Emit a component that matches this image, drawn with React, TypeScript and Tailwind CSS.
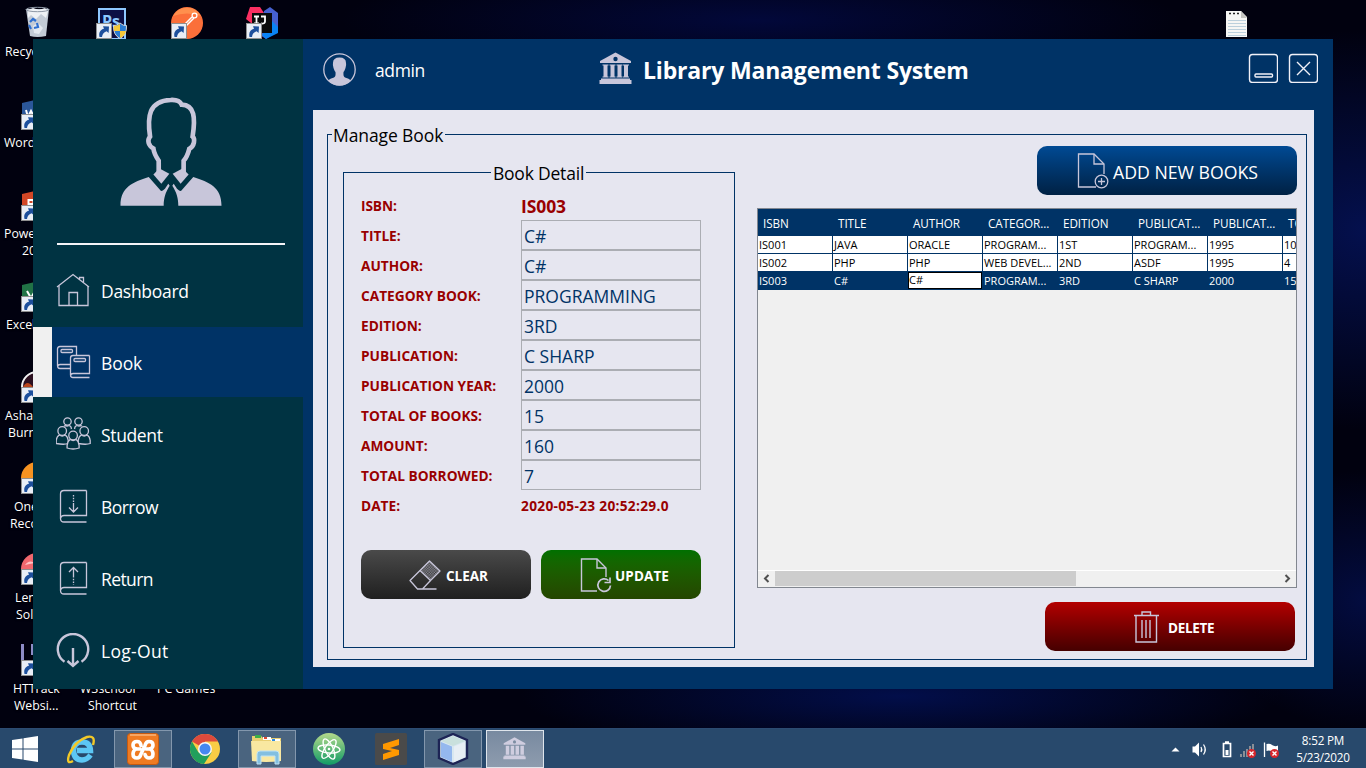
import React from "react";

const INK = "#c8c6da";

/* ---------- desktop ---------- */

function Shortcut() {
  return (
    <g>
      <rect x="0.5" y="0.5" width="15" height="15" fill="#e9eef6" stroke="#8f8f8f" />
      <path d="M3.5 14C2.5 9.5 4.5 6.5 8 5.8L7 3.2L13 3.5L12.6 10L10.6 8.3C7.5 9.5 6.5 11 6 14Z" fill="#1d4f9c" />
    </g>
  );
}

type Tile = { x: number; y: number; art: React.ReactNode };

const tiles: Tile[] = [
  {
    x: 21, y: 5,
    art: (
      <g>
        <path d="M5 4H28L25 31Q16 33 9 31Z" fill="#c3cbd6" />
        <path d="M7 5L12 3L18 5L24 3L27 6L25 13L20 9L15 14L10 10L7 13Z" fill="#eef1f5" />
        <path d="M12 21L17 18L22 23L18 29L13 28Z" fill="#e4e9f0" />
        <ellipse cx="16.5" cy="4.5" rx="11.5" ry="2.2" fill="none" stroke="#8d97a5" />
        <path d="M9 17l3-3 3 2M16 18l1 4-4 1M10 24l-2-4" stroke="#2e6fd0" strokeWidth="2.2" fill="none" />
      </g>
    ),
  },
  {
    x: 96, y: 7,
    art: (
      <g>
        <rect x="3" y="2" width="26" height="30" fill="#0c0f45" stroke="#8ec7ff" strokeWidth="2" />
        <text x="6" y="20" fontSize="16" fontWeight="700" fill="#8ec7ff" fontFamily="Open Sans, sans-serif">Ps</text>
        <g transform="translate(0 16)"><Shortcut /></g>
        <path d="M24 16Q20 19 17.500 18.500Q17 28 24 31.500Q31 28 30.500 18.500Q27 19 24 16Z" fill="#2a7bd0" stroke="#d8d8d8" />
        <path d="M24 17V24H18Q17.500 21 18 19Q21 19 24 17ZM24 24H30Q29 29 24 31Z" fill="#f6c83a" />
      </g>
    ),
  },
  {
    x: 171, y: 7,
    art: (
      <g>
        <circle cx="16" cy="16" r="16" fill="#fb6f3a" />
        <path d="M2 9A16 16 0 0 1 30 9Q16 4 2 9Z" fill="#ff8f4d" />
        <path d="M13 18L21 10M15 19L23 11" stroke="#fff" strokeWidth="1.500" fill="none" />
        <circle cx="23.500" cy="8.500" r="2.400" fill="none" stroke="#fff" strokeWidth="1.300" />
        <g transform="translate(0 16)"><Shortcut /></g>
      </g>
    ),
  },
  {
    x: 246, y: 7,
    art: (
      <g>
        <path d="M4 0L14 0L18 6L10 20L0 12Z" fill="#fb2f62" />
        <path d="M18 4L24 0L32 6V24L20 32L14 28Z" fill="#4661d0" />
        <path d="M26 14L32 20V26L20 32L16 28Z" fill="#0a84f5" />
        <rect x="6" y="6" width="20" height="20" fill="#0b0b0b" />
        <path d="M8 9.500h5M10.500 9.500v7M8 16.500h5M15 9.500h4v5q0 2.500-4 2" stroke="#fff" strokeWidth="1.800" fill="none" />
        <g transform="translate(0 16)"><Shortcut /></g>
      </g>
    ),
  },
  {
    x: 21, y: 98,
    art: (
      <g>
        <path d="M1 5L14 2V32H1Z" fill="#2b579a" />
        <path d="M5 12l2 7 3-6 3 6" stroke="#fff" strokeWidth="2" fill="none" />
        <g transform="translate(0 16)"><Shortcut /></g>
      </g>
    ),
  },
  {
    x: 21, y: 189,
    art: (
      <g>
        <path d="M1 5L14 2V32H1Z" fill="#d24726" />
        <path d="M7.500 18V11h5v4h-4" stroke="#fff" strokeWidth="2" fill="none" />
        <g transform="translate(0 16)"><Shortcut /></g>
      </g>
    ),
  },
  {
    x: 21, y: 280,
    art: (
      <g>
        <path d="M1 5L14 2V32H1Z" fill="#217346" />
        <path d="M6 11l4 7 4-7" stroke="#fff" strokeWidth="2" fill="none" />
        <g transform="translate(0 16)"><Shortcut /></g>
      </g>
    ),
  },
  {
    x: 21, y: 371,
    art: (
      <g>
        <circle cx="16" cy="16" r="15" fill="#2c1020" stroke="#f2f2f2" strokeWidth="2" />
        <path d="M2 16Q6 8 12 16Z" fill="#b9461c" />
        <g transform="translate(0 16)"><Shortcut /></g>
      </g>
    ),
  },
  {
    x: 21, y: 462,
    art: (
      <g>
        <circle cx="16" cy="16" r="16" fill="#f79321" />
        <g transform="translate(0 16)"><Shortcut /></g>
      </g>
    ),
  },
  {
    x: 21, y: 553,
    art: (
      <g>
        <circle cx="16" cy="16" r="16" fill="#f0686e" />
        <path d="M4 12Q8 6 14 10Q8 11 4 12Z" fill="#ffc2c4" />
        <g transform="translate(0 16)"><Shortcut /></g>
      </g>
    ),
  },
  {
    x: 21, y: 644,
    art: (
      <g>
        <path d="M0 0h3v16H0ZM10 0H12v11H10Z" fill="#8d8cc6" />
        <g transform="translate(0 16)"><Shortcut /></g>
      </g>
    ),
  },
  {
    x: 1221, y: 6,
    art: (
      <g>
        <path d="M5 5H20L26 11V31H5Z" fill="#f6f6f4" />
        <path d="M20 5V12H26Z" fill="#c4c4c0" />
        <path d="M7 14.500h18M7 17.500h18M7 20.500h18M7 23.500h18M7 26.500h18M7 29.500h18" stroke="#bcd0dc" />
        <path d="M8 7.500h2M12 7.500h2M16 7.500h2" stroke="#222" strokeWidth="1.500" />
      </g>
    ),
  },
];

const captions: [number, number, string][] = [
  [5, 44, "Recycle"], [4, 135, "Word"], [4, 226, "Power"], [22, 243, "20"], [6, 317, "Excel"],
  [5, 408, "Asham"], [8, 425, "Burni"], [14, 499, "One"], [10, 516, "Reco"], [15, 590, "Len"],
  [16, 607, "Sol"], [13, 681, "HTTrack"], [14, 698, "Websi..."], [80, 681, "W3school"],
  [88, 698, "Shortcut"], [157, 681, "PC Games"],
];

function Desktop() {
  return (
    <div className="absolute inset-0 overflow-hidden bg-[#01010f] bg-[radial-gradient(ellipse_260px_200px_at_1366px_230px,#04104e_0%,transparent_100%),radial-gradient(ellipse_160px_130px_at_1366px_600px,#030c40_0%,transparent_100%),radial-gradient(ellipse_380px_60px_at_900px_696px,#020e4a_0%,transparent_100%),radial-gradient(ellipse_420px_60px_at_760px_20px,#02083a_0%,transparent_100%)]">
      {tiles.map((t, i) => (
        <svg key={i} className="absolute size-8" style={{ left: t.x, top: t.y }} viewBox="0 0 32 32">
          {t.art}
        </svg>
      ))}
      {captions.map(([x, y, s]) => (
        <span
          key={s + y}
          className="absolute text-[12.3px] leading-4 whitespace-nowrap text-white [text-shadow:0_1px_2px_#000]"
          style={{ left: x, top: y }}
        >
          {s}
        </span>
      ))}
    </div>
  );
}

/* ---------- sidebar ---------- */

function Portrait() {
  const half = (
    <g>
      <path d="M480 506L508 521L484 551L460 523L474 509Z" />
      <path d="M361 617C361 562 398 546 446 531L483 573C495 571 497 561 505 551L509 557C496 577 491 595 491 617Z" />
    </g>
  );
  return (
    <svg className="ml-[87px] mt-[58px] h-[109px] w-[102px]" viewBox="360 290 306 328" fill={INK}>
      <path
        d="M476 516V482C468 470 462 460 460 445C444 436 441 420 450 409C441 350 446 301 512 299C530 298 541 304 545 313C584 314 587 352 578 409C586 416 584 438 568 446C564 462 560 472 551 482V516"
        fill="none" stroke={INK} strokeWidth="14"
      />
      {half}
      <g transform="translate(1026 0) scale(-1 1)">{half}</g>
    </svg>
  );
}

const HomeIcon = (
  <g>
    <path d="M1.500 14L17.500 1.500L33.500 14" />
    <path d="M3.500 13V32.500H32.500V13" />
    <path d="M13.500 32V19.500H22V32" />
    <path d="M24 6.500V4.500H28V9.500" />
  </g>
);

const BookIcon = (
  <g>
    <path d="M15 23.500H4.500Q2 23.500 2 20.500V4Q2 1.500 4.500 1.500H21V10M4 19.500H14.500M2 21.500Q2.500 19.500 4.500 19.500" />
    <rect x="5.500" y="4.500" width="11.500" height="3" rx="1" />
    <path d="M34 10.500H17.500Q15 10.500 15 13V30Q15 32.500 17.500 32.500H34M34 10.500V28.500H17.500Q15.500 28.500 15 30.500" />
    <rect x="18.500" y="13.500" width="11.500" height="3" rx="1" />
  </g>
);

function Person({ x, y, front }: { x: number; y: number; front?: boolean }) {
  return (
    <g transform={`translate(${x} ${y})`}>
      <circle cx="0" cy="0" r="4.300" />
      <path d={front ? "M-6 12.500V10Q-5.500 5.500 -3 4Q0 6 3 4Q5.500 5.500 6 10V12.500Q0 14.500 -6 12.500Z" : "M-6 12.500V9.500Q-5.500 5.500 -3 4Q0 6 3 4Q5.500 5.500 6 9.500V12.500Q2 14 -6 12.500Z"} />
    </g>
  );
}

const StudentIcon = (
  <g>
    <circle cx="12" cy="4.500" r="3.700" />
    <circle cx="23" cy="4.500" r="3.700" />
    <path d="M8.500 9Q9.500 8.500 12 9Q14.500 8 15.500 10L16 12M26.500 9Q25.500 8.500 23 9Q20.500 8 19.500 10L19 12" />
    <Person x={6.7} y={14} />
    <Person x={28.700} y={14} />
    <g fill="#003342"><Person x={17.600} y={18.500} front /></g>
  </g>
);

const bookShell = (
  <path d="M31 1.500H8.500Q5 1.500 5 5V29.500Q5 33 8.500 33H31M31 1.500V26.500H8.500Q5.500 26.500 5 29.500" />
);
const BorrowIcon = (
  <g>
    {bookShell}
    <path d="M18 6V14" strokeDasharray="1.500 1.300" />
    <path d="M18 14V22.500M13.500 18.500L18 23L22.500 18.500" />
  </g>
);
const ReturnIcon = (
  <g>
    {bookShell}
    <path d="M18 15V24" strokeDasharray="1.500 1.300" />
    <path d="M18 15V7M13.500 11L18 6.500L22.500 11" />
  </g>
);
const LogOutIcon = (
  <g strokeWidth="2.400">
    <path d="M9 28.800A15.200 15.200 0 1 1 26 28.800" />
    <path d="M17.500 15V33M12 28L17.500 33L23 28" />
  </g>
);

const nav = [
  { label: "Dashboard", icon: HomeIcon, track: "tracking-[-0.28px]" },
  { label: "Book", icon: BookIcon, active: true, track: "tracking-[-0.1px]" },
  { label: "Student", icon: StudentIcon, track: "tracking-[-0.35px]" },
  { label: "Borrow", icon: BorrowIcon, track: "tracking-[-0.55px]" },
  { label: "Return", icon: ReturnIcon, track: "tracking-[-0.6px]" },
  { label: "Log-Out", icon: LogOutIcon, track: "tracking-[0.3px]" },
];

function Sidebar() {
  return (
    <aside className="flex w-[270px] flex-col bg-[#003342]">
      <Portrait />
      <div className="mt-[37px] ml-6 h-[2px] w-[228px] bg-[#f4f4f8]" />
      <nav className="mt-[10px] flex flex-col gap-[2px]">
        {nav.map((n) => (
          <div
            key={n.label}
            className={
              n.active
                ? "flex h-[70px] items-center border-l-[19px] border-[#f0f0f0] bg-[#003366] pt-[2px] pl-1"
                : "flex h-[70px] items-center pt-[2px] pl-[23px]"
            }
          >
            <svg className="size-9" viewBox="0.5 0 36 36" fill="none" stroke={INK} strokeWidth="1.300">
              {n.icon}
            </svg>
            <span className={`ml-[9px] text-[17.5px] text-white ${n.track}`}>{n.label}</span>
          </div>
        ))}
      </nav>
    </aside>
  );
}

/* ---------- header ---------- */

function Museum({ className }: { className: string }) {
  return (
    <svg className={className} viewBox="0 0 33 33" fill={INK}>
      <path d="M16.500 0.500L32 9V11H1V9Z" />
      <circle cx="16.500" cy="7" r="2.200" fill="#003366" />
      <path d="M3.500 12.500h6v1h-1v11h1v1h-6v-1h1v-11h-1ZM10.500 12.500h6v1h-1v11h1v1h-6v-1h1v-11h-1ZM17.500 12.500h6v1h-1v11h1v1h-6v-1h1v-11h-1ZM24 12.500h6v1h-1v11h1v1h-6v-1h1v-11h-1Z" />
      <path d="M2 26.500H31V28H32.500V32H0.500V28H2Z" />
    </svg>
  );
}

function Header() {
  return (
    <header className="flex h-[71px] shrink-0 items-start">
      <svg className="mt-[14px] ml-5 size-[33px]" viewBox="0 0 33 33">
        <circle cx="16.500" cy="16.500" r="15.700" fill="none" stroke={INK} strokeWidth="1.300" />
        <path d="M10 10Q10 4.500 16.500 4.500Q23 4.500 23 10Q23.500 12 22.500 15Q21.500 18 20.500 19Q20 23.500 22 24.500Q26 25.500 28 27.500Q23 32.500 16.500 32.500Q10 32.500 5 27.500Q7 25.500 11 24.500Q13 23.500 12.500 19Q11.500 18 10.500 15Q9.500 12 10 10Z" fill={INK} />
      </svg>
      <span className="mt-[19px] ml-[19px] w-[224px] text-[17.5px] leading-6 tracking-[-0.4px] text-white">admin</span>
      <Museum className="size-[33px] mt-[13px]" />
      <h1 className="mt-[15px] ml-[11px] w-[340px] text-[23px] leading-8 font-bold tracking-[-0.18px] whitespace-nowrap text-white">
        Library Management System
      </h1>
      <div className="mt-[14px] ml-[265px] flex gap-[10px]">
        <svg className="size-[30px]" viewBox="-0.5 -0.5 30 30" fill="none" stroke="#f1f1f8" strokeWidth="1.400">
          <rect x="1" y="1" width="28" height="28" rx="3" />
          <rect x="6.500" y="20.500" width="17.500" height="3" rx="1" />
        </svg>
        <svg className="size-[30px]" viewBox="-0.5 -0.5 30 30" fill="none" stroke="#f1f1f8" strokeWidth="1.400">
          <rect x="1" y="1" width="28" height="28" rx="3" />
          <path d="M8.500 8.500L21.500 21.500M21.500 8.500L8.500 21.500" />
        </svg>
      </div>
    </header>
  );
}

/* ---------- book detail ---------- */

const fields: [string, string][] = [
  ["TITLE:", "C#"], ["AUTHOR:", "C#"], ["CATEGORY BOOK:", "PROGRAMMING"], ["EDITION:", "3RD"],
  ["PUBLICATION:", "C SHARP"], ["PUBLICATION YEAR:", "2000"], ["TOTAL OF BOOKS:", "15"],
  ["AMOUNT:", "160"], ["TOTAL BORROWED:", "7"],
];

function BookDetail() {
  return (
    <section className="relative mt-[37px] ml-[15px] h-[476px] w-[392px] border border-[#003366] pl-[17px]">
      <h3 className="absolute -top-3 left-[147px] w-[95px] bg-[#e6e6f0] text-center text-[17.5px] leading-6 tracking-[-0.2px] whitespace-nowrap text-black">
        Book Detail
      </h3>
      <div className="mt-[17px] flex h-[30px] items-center pt-[3px] text-[13.7px] font-bold tracking-[-0.1px] text-[#990000]">
        <span className="w-[160px]">ISBN:</span>
        <span className="text-[17.5px]">IS003</span>
      </div>
      {fields.map(([k, v]) => (
        <div key={k} className="flex h-[30px] items-center">
          <span className="w-[160px] pt-[3px] text-[13.7px] font-bold whitespace-nowrap text-[#990000]">{k}</span>
          <div className="flex h-[30px] w-[180px] items-center border border-[#abadb3] pt-[3px] pl-[2px] text-[17.5px] text-[#003366]">
            {v}
          </div>
        </div>
      ))}
      <div className="flex h-[30px] items-center pt-[3px] text-[13.7px] font-bold text-[#990000]">
        <span className="w-[160px]">DATE:</span>
        <span className="tracking-[0.3px]">2020-05-23 20:52:29.0</span>
      </div>
      <div className="mt-[30px] flex gap-[10px] text-[13.5px] font-bold text-white">
        <button className="flex h-[49px] w-[170px] items-center rounded-[10px] bg-linear-to-b from-[#4a4a4a] to-[#202020] pl-12">
          <svg className="h-[30px] w-[32px]" viewBox="0 0 32 30" fill="none" stroke={INK} strokeWidth="1.300" strokeLinejoin="round">
            <defs>
              <pattern id="dots" width="2.600" height="2.600" patternUnits="userSpaceOnUse">
                <rect width="1.300" height="1.300" fill={INK} fillOpacity="0.6" stroke="none" />
                <rect x="1.300" y="1.300" width="1.300" height="1.300" fill={INK} fillOpacity="0.6" stroke="none" />
              </pattern>
            </defs>
            <path d="M11 10.500L20.500 1L31 11L21.500 20.500Z" fill="url(#dots)" />
            <path d="M11 10.500L1 20.500L8.500 29H13.500L21.500 20.500M8.500 29H27.500" />
          </svg>
          <span className="ml-[5px] pt-[3px]">CLEAR</span>
        </button>
        <button className="flex h-[49px] w-[160px] items-center rounded-[10px] bg-linear-to-b from-[#007000] to-[#244600] pl-[39px]">
          <svg className="h-[36px] w-[32px]" viewBox="0 0 32 36" fill="none" stroke={INK} strokeWidth="1.400">
            <path d="M26 20V11L17 2H1.500V34H17" />
            <path d="M17 2V11H26" />
            <path d="M28.500 23.500A6.300 6.300 0 1 0 30.500 28.500M30 20.500V25.500H24.500" strokeWidth="1.700" />
          </svg>
          <span className="ml-[3px] pt-[3px] tracking-[0.1px]">UPDATE</span>
        </button>
      </div>
    </section>
  );
}

/* ---------- table ---------- */

const heads = ["ISBN", "TITLE", "AUTHOR", "CATEGOR...", "EDITION", "PUBLICAT...", "PUBLICAT...", "TOTAL"];
const rows = [
  ["IS001", "JAVA", "ORACLE", "PROGRAM...", "1ST", "PROGRAM...", "1995", "10"],
  ["IS002", "PHP", "PHP", "WEB DEVEL...", "2ND", "ASDF", "1995", "4"],
  ["IS003", "C#", "C#", "PROGRAM...", "3RD", "C SHARP", "2000", "15"],
];

function BookTable() {
  return (
    <div className="mt-[13px] flex h-[380px] w-[540px] flex-col overflow-hidden border border-[#828790] bg-[#f0f0f0]">
      <div className="flex h-[27px] w-[600px] bg-[#003366]">
        {heads.map((h, i) => (
          <div key={i} className="w-[75px] shrink-0 pt-px pl-[5px] text-[11.7px] leading-[26px] tracking-[-0.05px] whitespace-nowrap text-white">{h}</div>
        ))}
      </div>
      {rows.map((r, ri) => (
        <div key={ri} className={ri === 2 ? "flex h-[18px] w-[600px] bg-[#003366] text-white" : "flex h-[18px] w-[600px] bg-white text-black"}>
          {r.map((c, ci) => (
            <div
              key={ci}
              className={
                ri === 2 && ci === 2
                  ? "mr-px h-[17px] w-[74px] shrink-0 border border-black bg-white text-[11px] leading-[14px] text-black"
                  : "w-[75px] shrink-0 border-r border-b border-[#003366] pl-px text-[11px] leading-[18px] whitespace-nowrap"
              }
            >
              {c}
            </div>
          ))}
        </div>
      ))}
      <div className="mt-auto flex h-[17px] items-start border-t border-white bg-[#f0f0f0]">
        <svg className="h-4 w-[17px]" viewBox="0 0 17 16"><path d="M10.500 4L7 7.500L10.500 11" fill="none" stroke="#505050" strokeWidth="2" /></svg>
        <div className="h-[15px] w-[301px] bg-[#cdcdcd]" />
        <svg className="ml-auto h-4 w-[17px]" viewBox="0 0 17 16"><path d="M6.500 4L10 7.500L6.500 11" fill="none" stroke="#505050" strokeWidth="2" /></svg>
      </div>
    </div>
  );
}

function ManageBook() {
  return (
    <main className="ml-[10px] h-[557px] w-[1001px] bg-[#e6e6f0] pt-6 pl-[14px]">
      <section className="relative flex h-[526px] w-[980px] border border-[#003366]">
        <h2 className="absolute -top-3 left-1 w-[113px] bg-[#e6e6f0] pl-[1px] text-[17.5px] leading-6 tracking-[-0.1px] whitespace-nowrap text-black">
          Manage Book
        </h2>
        <BookDetail />
        <div className="ml-[22px] flex w-[540px] flex-col pt-[11px]">
          <button className="flex h-[49px] w-[260px] items-center self-end rounded-[10px] bg-linear-to-b from-[#004a94] to-[#002144] pl-10 text-[17.7px] text-white">
            <svg className="h-[37px] w-[32px]" viewBox="0 0 32 37" fill="none" stroke={INK} strokeWidth="1.300">
              <path d="M27 22V12L17 2H1.500V35H19" />
              <path d="M17 2V12H27" />
              <circle cx="24.500" cy="29.500" r="6.300" />
              <path d="M24.500 26V33M21 29.500H28" />
            </svg>
            <span className="ml-1 pt-[4px] whitespace-nowrap">ADD NEW BOOKS</span>
          </button>
          <BookTable />
          <button className="mt-[14px] mr-[2px] flex h-[49px] w-[250px] items-center self-end rounded-[10px] bg-linear-to-b from-[#b40000] to-[#460000] pl-[88px] text-[13.5px] font-bold text-white">
            <svg className="h-[34px] w-[26px]" viewBox="0 0 26 34" fill="none" stroke={INK} strokeWidth="1.400">
              <path d="M1 5.500H26M9 5V2H17.500V5M3 6V32H23.500V6" />
              <path d="M9 10V28M13 10V28M17 10V28" />
            </svg>
            <span className="ml-[9px] pt-[3px] tracking-[-0.3px]">DELETE</span>
          </button>
        </div>
      </section>
    </main>
  );
}

/* ---------- taskbar ---------- */

function Slot({ children, kind }: { children: React.ReactNode; kind?: "open" | "focus" }) {
  const cls =
    kind === "open"
      ? "flex h-[38px] w-[58px] items-center justify-center border border-[#8397ad] bg-[#4a647f]"
      : kind === "focus"
        ? "flex h-[38px] w-[58px] items-center justify-center border border-[#dfe5ec] bg-linear-to-b from-[#788aa0] to-[#8e9cae]"
        : "flex h-[38px] w-[58px] items-center justify-center";
  return <div className={cls}>{children}</div>;
}

function Taskbar() {
  return (
    <footer className="absolute inset-x-0 bottom-0 flex h-10 items-center border-t border-[#2c4b72] bg-[#28496c]">
      <svg className="ml-[12px] size-[26px]" viewBox="0 0 26 26" fill="#fff">
        <path d="M0 4L10.500 2.500V12.500H0ZM11.500 2.300L26 0V12.500H11.500ZM0 13.500H10.500V23.500L0 22ZM11.500 13.500H26V26L11.500 23.800Z" />
      </svg>
      <div className="ml-[14px] flex gap-1">
        <Slot>
          <svg className="size-8" viewBox="0 0 32 32" fill="none">
            <path d="M25.500 22Q22 27 17 27Q9 27 8.500 17.500Q9 9 17 9Q25 9 25.500 17.500H12" stroke="#5cc7f5" strokeWidth="5.400" />
            <path d="M28 12Q31 2 22 4Q10 8 4 22Q1 32 8 28" stroke="#f2c928" strokeWidth="2.400" />
          </svg>
        </Slot>
        <Slot kind="open">
          <svg className="size-8" viewBox="0 0 32 32">
            <rect x="0.500" y="0.500" width="31" height="31" rx="3" fill="#ef7b22" stroke="#c65a10" />
            <path d="M3 2H29" stroke="#ffd1a3" />
            <g stroke="#fff" strokeWidth="3.600" fill="none" strokeLinejoin="round" strokeLinecap="round">
              <path d="M14 12.500Q13.500 8.500 10 8.500Q6 8.500 6 12Q6 15 9 16H13M9 16Q6 17.500 6 21Q6 25 10 25Q13 25 14 21L18 12.500Q19 8.500 22 8.500Q26 8.500 26 12Q26 15 23 16H19M23 16Q26 17.500 26 21Q26 25 22 25Q19 25 18 21.500" />
            </g>
          </svg>
        </Slot>
        <Slot>
          <svg className="size-[30px]" viewBox="0 0 30 30">
            <circle cx="15" cy="15" r="15" fill="#f9cd45" />
            <path d="M15 15L2 7.500A15 15 0 0 1 28 7.500H15Z" fill="#de4a3c" />
            <path d="M2 7.500A15 15 0 0 0 14 30L21.500 18.500L15 15L8.500 18.500Z" fill="#219f5c" />
            <circle cx="15" cy="15" r="7" fill="#f6f6f6" />
            <circle cx="15" cy="15" r="5.500" fill="#4587f0" />
          </svg>
        </Slot>
        <Slot kind="open">
          <svg className="size-8" viewBox="0 0 32 32">
            <path d="M1 3H10L12 5H30V28H1Z" fill="#e9cf72" />
            <path d="M4 2h6v3H4Z" fill="#3cae48" />
            <path d="M12 4h8v3h-8Z" fill="#fff" /><path d="M13 4h3v2h-3Z" fill="#dc4a34" />
            <path d="M20 6h9v3h-9Z" fill="#fff" /><path d="M21 6h3v2h-3Z" fill="#2d8be0" />
            <path d="M0 8H30V28Q15 30 1 28Z" fill="#f9e8a1" />
            <path d="M6 31V21Q6 18 9 18H25Q28 18 28 21V31H24V23H10V31Z" fill="#83bfe0" stroke="#bfe3f5" />
          </svg>
        </Slot>
        <Slot>
          <svg className="size-8" viewBox="0 0 32 32">
            <defs>
              <linearGradient id="atom" x1="0" y1="0" x2="0" y2="1">
                <stop offset="0" stopColor="#b4d98b" /><stop offset="1" stopColor="#109b66" />
              </linearGradient>
            </defs>
            <circle cx="16" cy="16" r="16" fill="url(#atom)" />
            <g fill="none" stroke="#fff" strokeWidth="1.400">
              <ellipse cx="16" cy="16" rx="4" ry="11" transform="rotate(-25 16 16)" />
              <ellipse cx="16" cy="16" rx="4" ry="11" transform="rotate(35 16 16)" />
              <ellipse cx="16" cy="16" rx="4" ry="11" transform="rotate(95 16 16)" />
            </g>
            <circle cx="16" cy="16" r="1.300" fill="#fff" />
          </svg>
        </Slot>
        <Slot>
          <svg className="size-8" viewBox="0 0 32 32">
            <rect width="32" height="32" rx="1.500" fill="#4a4a4a" />
            <path d="M8 11L24 6V12L15 15L24 17V22L8 27V21L17 18L8 16Z" fill="#ff9800" />
          </svg>
        </Slot>
        <Slot kind="open">
          <svg className="size-8" viewBox="0 0 32 32">
            <path d="M16 1L30 7V25L16 31L2 25V7Z" fill="#d8e7f0" stroke="#1d2455" strokeWidth="2.400" />
            <path d="M16 3L28 8L16 13L4 8Z" fill="#c9e0dd" />
            <path d="M4 9L15 13.500V29L4 24Z" fill="#94b8ee" />
            <path d="M17 13.500L28 9V24L17 29Z" fill="#e7eef4" />
          </svg>
        </Slot>
        <Slot kind="focus">
          <svg className="mr-[2px] h-[23px] w-[23px]" viewBox="0 0 33 33" fill="#cfcddf">
            <path d="M16.500 0.500L32 9V11H1V9Z" />
            <circle cx="16.500" cy="7" r="2.200" fill="#7c8da2" />
            <path d="M4 12.500h5v13H4ZM11 12.500h5v13h-5ZM18 12.500h5v13h-5ZM25 12.500h5v13h-5ZM2 26.500H31V28H32.500V32H0.500V28H2Z" />
          </svg>
        </Slot>
      </div>
      <div className="ml-auto flex items-center">
        <svg className="h-5 w-[112px]" viewBox="0 0 112 20">
          <path d="M0.500 12.500L4.500 8.500L8.500 12.500Z" fill="#fff" />
          <path d="M21.500 7.500H24L28 3.500V17.500L24 13.500H21.500Z" fill="#fff" />
          <path d="M30 8q1.500 2.500 0 5M32.500 5.500q3.500 5 0 10" stroke="#fff" fill="none" strokeWidth="1.300" />
          <path d="M52.500 4.500h7v13h-7ZM54 3h4" stroke="#fff" fill="none" strokeWidth="1.700" />
          <path d="M54.500 11h3v5h-3Z" fill="#fff" />
          <path d="M69 15h2v3h-2ZM72 12h2v6h-2ZM75 10h2v8h-2ZM78 7h2v10h-2ZM81 5h2v12h-2Z" fill="#8a8f96" />
          <circle cx="80.500" cy="14.500" r="4.500" fill="#d8262c" />
          <path d="M78.500 12.500l4 4M82.500 12.500l-4 4" stroke="#fff" strokeWidth="1.400" />
          <path d="M93.500 3.500V18" stroke="#fff" strokeWidth="1.300" />
          <path d="M95.500 5Q99 4 101 6Q104 8 107 6.500V13Q103 14 100 12Q98 11 95.500 12Z" fill="#fff" />
          <circle cx="103.500" cy="14.500" r="4.500" fill="#d8262c" />
          <path d="M101.500 12.500l4 4M105.500 12.500l-4 4" stroke="#fff" strokeWidth="1.400" />
        </svg>
        <div className="mr-[15px] ml-[12px] w-[56px] text-center text-[11.7px] leading-[16.500px] tracking-[-0.200px] whitespace-nowrap text-white">
          <div>8:52 PM</div>
          <div>5/23/2020</div>
        </div>
      </div>
    </footer>
  );
}

export default function App() {
  return (
    <div className="relative h-[768px] w-[1366px] overflow-hidden font-['Open_Sans','Noto_Sans',sans-serif]">
      <Desktop />
      <div className="absolute top-[39px] left-[33px] flex h-[650px] w-[1300px] bg-[#003366]">
        <Sidebar />
        <div className="flex w-[1030px] flex-col">
          <Header />
          <ManageBook />
        </div>
      </div>
      <Taskbar />
    </div>
  );
}
